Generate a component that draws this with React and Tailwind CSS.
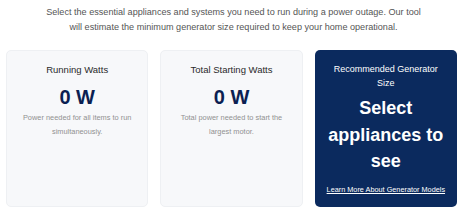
export default function App() {
  const font = { fontFamily: '"Liberation Sans", Arial, sans-serif' };
  return (
    <div className="w-[467px] h-[220px] bg-white overflow-hidden" style={font}>
      <p className="mx-auto max-w-[380px] pt-[5px] text-center text-[9.1px] leading-[15px] text-[#555]">
        Select the essential appliances and systems you need to run during a power outage. Our tool will estimate the minimum generator size required to keep your home operational.
      </p>
      <div className="mt-[15px] ml-[6px] mr-[10px] grid grid-cols-3 gap-[12px]">
        <div className="rounded-[5px] border border-[#eef0f3] bg-[#f7f8fa] px-2 pt-3 text-center">
          <h3 className="text-[9.5px] leading-[14px] font-medium text-[#2a2a2a]">Running Watts</h3>
          <div className="mt-[8px] text-[20px] leading-[24px] font-bold text-[#0b1f52]">0 W</div>
          <p className="mt-[2px] text-[7.4px] leading-[14px] text-[#919191]">
            Power needed for all items to run simultaneously.
          </p>
        </div>
        <div className="rounded-[5px] border border-[#eef0f3] bg-[#f7f8fa] px-2 pt-3 text-center">
          <h3 className="text-[9.5px] leading-[14px] font-medium text-[#2a2a2a]">Total Starting Watts</h3>
          <div className="mt-[8px] text-[20px] leading-[24px] font-bold text-[#0b1f52]">0 W</div>
          <p className="mt-[2px] px-2 text-[7.4px] leading-[14px] text-[#919191]">
            Total power needed to start the largest motor.
          </p>
        </div>
        <div className="rounded-[5px] bg-[#0b2a5e] px-2 py-3 text-center text-white">
          <h3 className="px-2 text-[9px] leading-[14px]">Recommended Generator Size</h3>
          <div className="mt-[5px] text-[18px] leading-[26.5px] font-bold">Select appliances to see</div>
          <a href="#" className="mt-[9px] block whitespace-nowrap text-[7.3px] leading-[11px] underline">
            Learn More About Generator Models
          </a>
        </div>
      </div>
    </div>
  );
}
